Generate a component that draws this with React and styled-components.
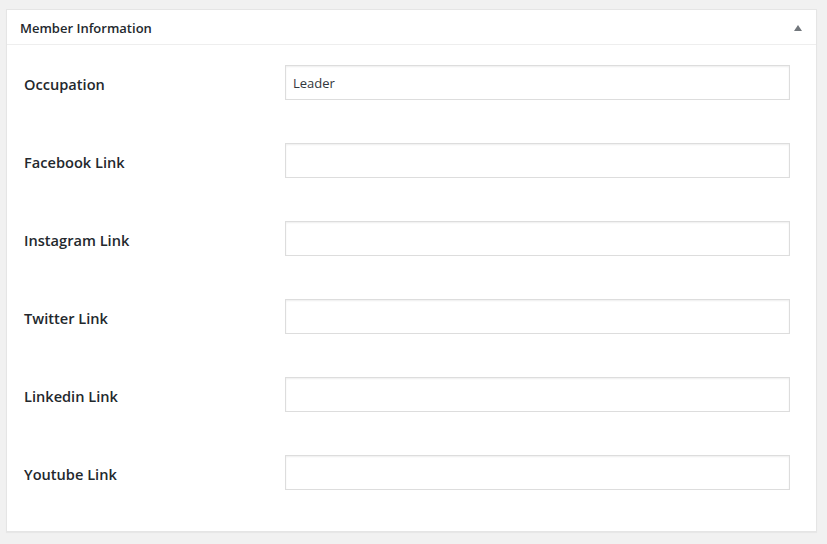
import styled, { createGlobalStyle } from "styled-components";

const GlobalStyle = createGlobalStyle`
  html, body {
    margin: 0;
    background: #f1f1f1;
  }
  body {
    font-family: "Open Sans", "Noto Sans", sans-serif;
    color: #23282d;
  }
`;

const fields = [
  { label: "Occupation", value: "Leader" },
  { label: "Facebook Link", value: "" },
  { label: "Instagram Link", value: "" },
  { label: "Twitter Link", value: "" },
  { label: "Linkedin Link", value: "" },
  { label: "Youtube Link", value: "" },
];

export default function App() {
  return (
    <>
      <GlobalStyle />
      <StyledPage>
        <StyledPostbox>
          <StyledHeader>
            <StyledTitle>Member Information</StyledTitle>
            <StyledToggle type="button" aria-label="Toggle panel">
              <svg width="8" height="6" viewBox="0 0 8 6">
                <path d="M4 0 L8 6 L0 6 Z" fill="#72777c" />
              </svg>
            </StyledToggle>
          </StyledHeader>
          <StyledBody>
            {fields.map((f) => (
              <StyledRow key={f.label}>
                <StyledLabel>{f.label}</StyledLabel>
                <StyledInput type="text" defaultValue={f.value} />
              </StyledRow>
            ))}
          </StyledBody>
        </StyledPostbox>
      </StyledPage>
    </>
  );
}

const StyledPage = styled.div`
  padding: 9px 10px 12px 6px;
`;

const StyledPostbox = styled.div`
  background: #fff;
  border: 1px solid #e5e5e5;
  box-shadow: 0 1px 1px rgba(0, 0, 0, 0.04);
`;

const StyledHeader = styled.div`
  display: flex;
  align-items: center;
  justify-content: space-between;
  height: 33px;
  padding: 1px 14px 0 13px;
  border-bottom: 1px solid #eee;
`;

const StyledTitle = styled.h2`
  margin: 0;
  font-size: 13px;
  font-weight: 600;
  color: #23282d;
`;

const StyledToggle = styled.button`
  display: flex;
  align-items: center;
  padding: 0;
  margin-top: 1px;
  background: none;
  border: none;
`;

const StyledBody = styled.div`
  display: flex;
  flex-direction: column;
  gap: 43px;
  padding: 20px 26px 41px 17px;
`;

const StyledRow = styled.div`
  display: grid;
  grid-template-columns: 261px 1fr;
  align-items: center;
`;

const StyledLabel = styled.label`
  font-size: 14.6px;
  font-weight: 600;
  color: #23282d;
  margin-top: 3px;
`;

const StyledInput = styled.input`
  box-sizing: border-box;
  width: 505px;
  height: 35px;
  padding: 0 7px;
  border: 1px solid #ddd;
  box-shadow: inset 0 1px 2px rgba(0, 0, 0, 0.07);
  background: #fff;
  font-family: "Open Sans", "Noto Sans", sans-serif;
  font-size: 13px;
  color: #32373c;
  outline: none;
`;
